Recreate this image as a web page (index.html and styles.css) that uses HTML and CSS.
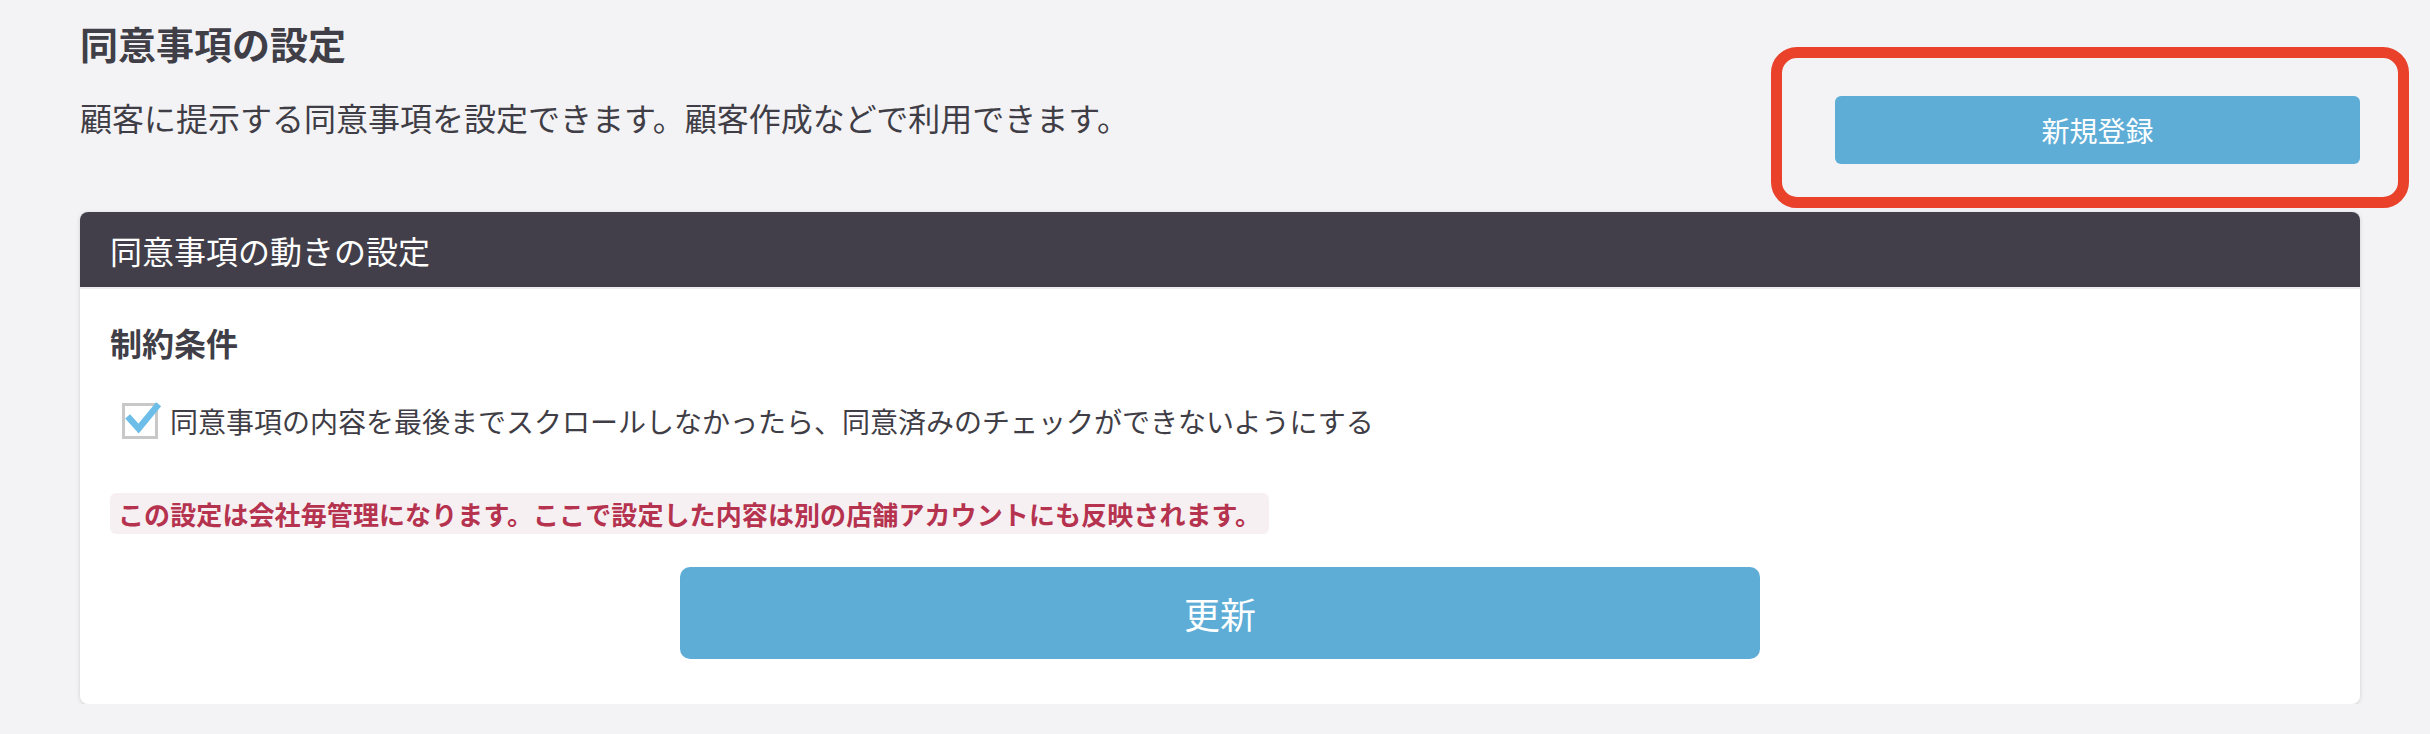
FILE: index.html
```html
<!DOCTYPE html>
<html lang="ja">
<head>
  <meta charset="UTF-8">
  <meta name="viewport" content="width=device-width, initial-scale=1.0">
  <title>同意事項の設定</title>
  <link rel="stylesheet" href="styles.css">
</head>
<body>
  <section class="consent-page">
    <header class="page-head">
      <div class="page-intro">
        <h1>同意事項の設定</h1>
        <p class="lead">顧客に提示する同意事項を設定できます。顧客作成などで利用できます。</p>
      </div>
      <div class="new-entry">
        <button type="button" class="btn btn-new">新規登録</button>
        <!-- 注目ポイントの赤枠 -->
        <span class="highlight"></span>
      </div>
    </header>

    <section class="panel">
      <h2 class="panel-title">同意事項の動きの設定</h2>
      <div class="panel-body">
        <h3>制約条件</h3>
        <label class="check-row">
          <svg class="check-box" width="36" height="36" viewBox="0 0 36 36">
            <rect x="1.5" y="1.5" width="33" height="33" fill="#fff" stroke="#c8c8c8" stroke-width="3"/>
            <path d="M5.6 13.3 L16.6 25.6 L36.6 1.3" fill="none" stroke="#6cbde7" stroke-width="6.5"/>
          </svg>
          <span>同意事項の内容を最後までスクロールしなかったら、同意済みのチェックができないようにする</span>
        </label>
        <p class="notice">この設定は会社毎管理になります。ここで設定した内容は別の店舗アカウントにも反映されます。</p>
        <div class="actions">
          <button type="submit" class="btn btn-update">更新</button>
        </div>
      </div>
    </section>
  </section>
</body>
</html>
```

FILE: styles.css
```css
body {
  margin: 0;
  background: #f3f3f6;
  color: #3f3d45;
  font-family: "Noto Sans CJK JP", "Noto Sans", sans-serif;
}
.consent-page {
  padding: 21px 70px 0 80px;
}
.page-head {
  display: flex;
  justify-content: space-between;
  align-items: flex-start;
}
h1 {
  margin: 0;
  font-size: 38px;
  line-height: 44px;
  font-weight: bold;
  color: #403e47;
}
.lead {
  margin: 32px 0 0;
  font-size: 32px;
  line-height: 40px;
}
.new-entry {
  position: relative;
  margin-top: 75px;
}
.highlight {
  position: absolute;
  top: -49px;
  left: -64px;
  right: -49px;
  bottom: -44px;
  border: 11px solid #e9412a;
  border-radius: 26px;
  pointer-events: none;
}
.btn {
  display: block;
  border: none;
  background: #5eadd7;
  color: #fff;
  font-family: inherit;
  cursor: pointer;
}
.btn-new {
  width: 525px;
  height: 68px;
  border-radius: 6px;
  font-size: 28px;
}
.panel {
  margin-top: 48px;
  background: #fff;
  border-radius: 8px;
  overflow: hidden;
  box-shadow: 0 1px 4px rgba(0,0,0,0.15);
}
.panel-title {
  display: flex;
  align-items: center;
  height: 75px;
  margin: 0;
  padding: 0 30px;
  background: #423f4a;
  color: #fff;
  font-size: 32px;
  font-weight: normal;
  border-bottom: 2px solid #eceef1;
}
.panel-body {
  padding: 33px 30px 45px;
}
.panel-body h3 {
  margin: 0;
  font-size: 32px;
  line-height: 40px;
  font-weight: bold;
  color: #403e47;
}
.check-row {
  display: flex;
  align-items: center;
  gap: 12px;
  height: 40px;
  margin: 39px 0 0 12px;
  font-size: 28px;
  cursor: pointer;
}
.check-box {
  overflow: visible;
  flex: none;
}
.notice {
  display: inline-block;
  margin: 52px 0 0;
  padding: 0 8px;
  background: #f7f0f3;
  border-radius: 6px;
  color: #b5334f;
  font-size: 26px;
  line-height: 41px;
  font-weight: bold;
  letter-spacing: 0.1px;
}
.actions {
  display: flex;
  justify-content: center;
  margin-top: 33px;
}
.btn-update {
  width: 1080px;
  height: 92px;
  border-radius: 10px;
  font-size: 36px;
}
```
